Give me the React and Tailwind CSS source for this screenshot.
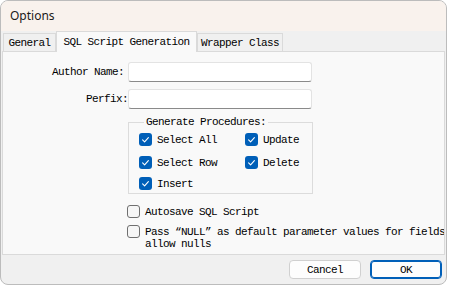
import React from "react";

const mono = "font-['Liberation_Mono','DejaVu_Sans_Mono',monospace] text-[11px] tracking-[-0.6px] leading-[12px] text-black";

function Check({ checked }) {
  if (!checked) {
    return <span className="w-[13px] h-[13px] shrink-0 rounded-[3px] border border-[#6f6f6f] bg-[#f6f6f6]"></span>;
  }
  return (
    <span className="w-[13px] h-[13px] shrink-0 rounded-[3px] bg-[#005fb8] flex items-center justify-center">
      <svg width="13" height="13" viewBox="0 0 13 13">
        <path d="M3.6 6.9 L5.6 8.8 L9.4 4.6" fill="none" stroke="white" strokeWidth="1.1" strokeLinecap="round" strokeLinejoin="round" />
      </svg>
    </span>
  );
}

function Option({ label, className = "" }) {
  return (
    <div className={"flex items-center gap-[5px] " + className}>
      <Check checked />
      <span>{label}</span>
    </div>
  );
}

export default function App() {
  return (
    <div className="w-[449px] h-[286px] bg-white overflow-hidden">
      <div className="w-[447px] h-[285px] border border-[#bcbcbc] rounded-[8px] bg-[#f0f0f0] flex flex-col overflow-hidden">
        {/* Title bar */}
        <div className="h-[30px] shrink-0 bg-[#f9f2ed] pl-[9px] flex items-center font-['Noto_Sans','Open_Sans',sans-serif] text-[12px] text-[#1a1a1a]">
          Options
        </div>

        {/* Tabs */}
        <div className={"h-[20px] shrink-0 pl-[2px] flex items-end relative z-10 " + mono}>
          <div className="w-[53px] h-[18px] border border-[#dadada] border-b-0 bg-[#f0f0f0] flex items-center justify-center">
            General
          </div>
          <div className="w-[141px] h-[21px] -mb-px border border-[#dadada] border-b-0 bg-[#f9f9f9] flex items-start justify-center pt-[4px]">
            SQL Script Generation
          </div>
          <div className="w-[86px] h-[18px] border border-[#dadada] border-b-0 bg-[#f0f0f0] flex items-center justify-center">
            Wrapper Class
          </div>
        </div>

        {/* Tab panel */}
        <div className={"mx-[1px] h-[204px] shrink-0 bg-[#f9f9f9] border border-[#dadada] overflow-hidden whitespace-nowrap " + mono}>
          <div className="mt-[10px] flex items-center">
            <span className="w-[125px] pr-[4px] text-right">Author Name:</span>
            <div className="w-[184px] h-[20px] bg-white border border-[#e3e3e3] border-b-[#8a8a8a] rounded-[3px]"></div>
          </div>
          <div className="mt-[7px] flex items-center">
            <span className="w-[125px] text-right">Perfix:</span>
            <div className="w-[184px] h-[20px] bg-white border border-[#e3e3e3] border-b-[#8a8a8a] rounded-[3px]"></div>
          </div>

          <fieldset className="mt-[7px] ml-[125px] w-[185px] border border-[#dcdcdc] pl-[10px] pt-[5px] pb-[3px]">
            <legend className="ml-[5px] px-[2px] leading-[12px]">Generate Procedures:</legend>
            <div className="flex">
              <Option label="Select All" className="w-[106px]" />
              <Option label="Update" />
            </div>
            <div className="flex mt-[10px]">
              <Option label="Select Row" className="w-[106px]" />
              <Option label="Delete" />
            </div>
            <Option label="Insert" className="mt-[8px]" />
          </fieldset>

          <div className="mt-[11px] ml-[124px] flex items-center gap-[5px]">
            <Check />
            <span>Autosave SQL Script</span>
          </div>
          <div className="mt-[7px] ml-[124px] flex items-start gap-[5px]">
            <Check />
            <span className="pt-px">
              Pass “NULL” as default parameter values for fields
              <br />
              allow nulls
            </span>
          </div>
        </div>

        {/* Footer */}
        <div className={"flex-1 flex justify-end items-start gap-[9px] pt-[5px] pr-[4px] " + mono}>
          <button className="w-[72px] h-[19px] bg-[#fdfdfd] border border-[#d0d0d0] rounded-[4px]">Cancel</button>
          <button className="w-[72px] h-[19px] bg-[#fdfdfd] border border-[#005fb8] rounded-[4px] shadow-[inset_0_0_0_1px_#005fb8]">OK</button>
        </div>
      </div>
    </div>
  );
}
